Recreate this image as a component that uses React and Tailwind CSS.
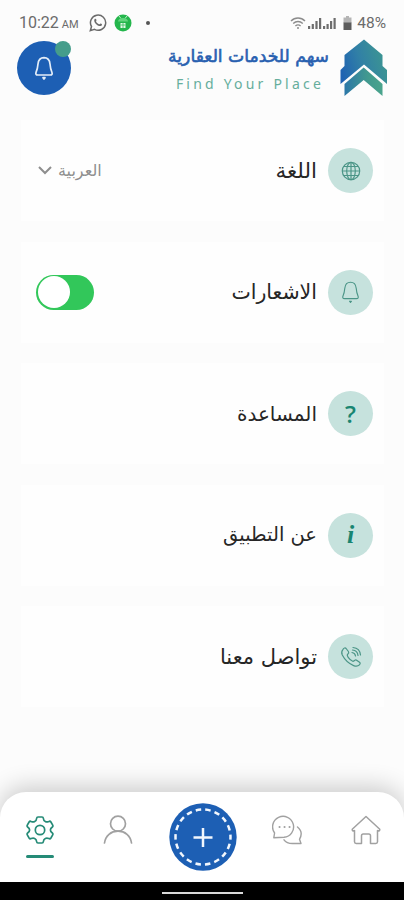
const BellIcon = ({ className }) => (
  <svg className={className} viewBox="0 0 20 24" fill="none" stroke="currentColor" strokeLinecap="round" strokeLinejoin="round">
    <path d="M10 1.2c-3.800 0-5.600 2.600-6 6.300-.3 3.500-.5 5-1.900 8.200-.7 1.700-.1 2.800 1.600 2.800h12.600c1.700 0 2.300-1.100 1.600-2.800-1.400-3.200-1.600-4.700-1.900-8.200C15.600 3.800 13.800 1.200 10 1.200z" />
    <path d="M9 21.200h2L10 22.500z" fill="currentColor" />
  </svg>
)

const GlobeIcon = () => (
  <svg className="size-5" viewBox="0 0 20 20" fill="none" stroke="currentColor" strokeWidth="1.200">
    <circle cx="10" cy="10" r="8.700" />
    <ellipse cx="10" cy="10" rx="4.300" ry="8.700" />
    <path d="M10 1.300v17.400M1.300 10h17.400M2.700 5.500h14.600M2.700 14.500h14.600" />
  </svg>
)

const PhoneIcon = () => (
  <svg className="size-[22px]" viewBox="0 0 22 22" fill="none" stroke="currentColor" strokeWidth="1.200" strokeLinecap="round" strokeLinejoin="round">
    <path d="M3 3.300c1-1.300 2.200-1.800 3.100-.8l2.300 3c.8 1.100.4 1.900-.7 2.800-.8.700-.6 1.500.5 3 1.500 2 3 3.400 4.500 4 .9.300 1.300-.5 2-1 .8-.6 1.500-.5 2.300.1l2.500 1.900c1 .8.800 1.700-.1 2.600-1.500 1.500-3.300 1.700-5.800.7-5-2-9-6-11.300-10.500-1-2.200-.6-4.300.7-5.800z" />
    <path d="M12 6.500c2 .2 3.300 1.500 3.500 3.500M12.500 4c3.200.3 5.200 2.300 5.500 5.500M13 1.500c4.400.4 7.100 3.100 7.500 7.500" />
  </svg>
)

const Logo = () => (
  <svg className="h-[58px] w-12" viewBox="0 0 48 58">
    <defs>
      <linearGradient id="roof" x1="0" y1="0.700" x2="1" y2="0.400">
        <stop offset="0" stopColor="#1f62b2" />
        <stop offset="0.450" stopColor="#3180a6" />
        <stop offset="1" stopColor="#3d9790" />
      </linearGradient>
      <linearGradient id="chevron" x1="0" y1="0" x2="1" y2="0">
        <stop offset="0" stopColor="#2c77a8" />
        <stop offset="0.600" stopColor="#41998f" />
        <stop offset="1" stopColor="#4aa48c" />
      </linearGradient>
    </defs>
    <path d="M24 .5l18.500 15.500v11l4.500 4v14L24 25.500 .5 45V31l4-4V16z" fill="url(#roof)" />
    <path d="M23.700 28.500L42.500 45v12L23.700 41 4.500 57V45z" fill="url(#chevron)" />
  </svg>
)

const StatusBar = () => (
  <div className="flex h-10 items-start justify-between pt-[15px] pl-[19px] pr-[18px] text-[#6b6b6b]">
    <div className="flex h-4 items-center">
      <div className="flex w-[60px] items-baseline gap-[3px] whitespace-nowrap font-[Roboto] text-[16px] leading-4">
        <span>10:22</span>
        <span className="text-[11px] leading-3">AM</span>
      </div>
      <svg className="ml-[10px] size-[18px]" viewBox="0 0 18 18" fill="none" stroke="currentColor" strokeWidth="1.500">
        <path d="M1.300 16.700l1.200-4.200a7.600 7.600 0 1 1 3 2.900z" />
        <path d="M5.500 5.200c1-.9 1.500-.4 2 .9.200.7-.8 1-.3 1.700.8 1.400 1.600 2 2.800 2.500.8.300 1-.9 1.600-.8 1.200.4 1.600.7 1.300 1.400-.6 1.400-2 1.500-3.600.8C7 10.500 4.300 7.500 5.500 5.200z" fill="currentColor" stroke="none" />
      </svg>
      <svg className="ml-[7px] size-[18px]" viewBox="0 0 18 18">
        <circle cx="9" cy="9" r="8.500" fill="#24b64c" />
        <path d="M5 2l2 2.500M13 2l-2 2.500" stroke="#bff0c8" strokeWidth="1" />
        <path d="M4 7.500a5 3.500 0 0 1 10 0z" fill="#62d47d" />
        <path d="M6.500 9h5v5h-5z" fill="#e4f9e8" />
        <path d="M9 9v5M6.500 11h5" stroke="#24b64c" strokeWidth=".7" />
      </svg>
      <span className="ml-[14px] size-1 rounded-full bg-[#555555]" />
    </div>
    <div className="flex h-4 items-center">
      <svg className="mr-[2px] h-[14px] w-4" viewBox="0 0 16 14" fill="none" stroke="#8c8c8c" strokeWidth="1.400">
        <path d="M1 5c4-4 10-4 14 0M3.200 7.500c2.800-2.700 6.800-2.700 9.600 0M5.400 10c1.600-1.400 3.600-1.400 5.200 0" />
        <circle cx="8" cy="12" r="1" fill="#8c8c8c" stroke="none" />
      </svg>
      <svg className="h-3 w-[28px]" viewBox="0 0 28 12" fill="#6d6d6d">
        <path d="M0 9h2.200v3H0zM3.700 7h2.200v5H3.700zM7.400 4h2.200v8H7.400zM11 1h2.200v11H11zM15 9h2.200v3H15zM18.500 7h2.200v5h-2.200zM22 4h2.200v8H22zM25.500 1h2.200v11h-2.200z" />
      </svg>
      <svg className="ml-[7px] mr-[5px] h-[14px] w-[9px]" viewBox="0 0 9 14">
        <path d="M3 0h3v1.500h2.500V7h-8V1.500H3z" fill="#b5b5b5" />
        <path d="M.5 6.500h8V14h-8z" fill="#5c5c5c" />
      </svg>
      <span className="font-[Roboto] text-[15.500px] leading-4">48%</span>
    </div>
  </div>
)

const Header = () => (
  <header className="flex h-20 items-start justify-between pl-[17px] pr-4">
    <div className="relative mt-[1px] flex size-[54px] items-center justify-center rounded-full bg-[#1d5fb4] text-[#e3edf8]">
      <BellIcon className="h-[25px] w-5 stroke-[1.700]" />
      <span className="absolute right-0 top-0 size-4 rounded-full bg-[#459d8b]" />
    </div>
    <div className="-mt-[1px] flex items-start">
      <div className="mr-[11px] flex flex-col items-end">
        <p dir="rtl" className="mt-[5px] whitespace-nowrap font-['DejaVu_Sans',sans-serif] text-[17.200px] leading-6 text-[#2860b0] [-webkit-text-stroke:0.600px_#2860b0]">سهم للخدمات العقارية</p>
        <p className="mt-[6px] mr-[5px] whitespace-nowrap font-['Noto_Sans',sans-serif] text-[14px] leading-5 tracking-[3.200px] text-[#66ae9c]">Find Your Place</p>
      </div>
      <Logo />
    </div>
  </header>
)

const Row = ({ icon, label, size = 'text-[20px]', children }) => (
  <div dir="rtl" className="flex h-[101px] items-center bg-[#fefefe] pr-[11px] pl-[15px]">
    <div className="flex size-[45px] items-center justify-center rounded-full bg-[#c6e2dd] text-[#4b9587]">{icon}</div>
    <span className={`mr-[11px] whitespace-nowrap font-['DejaVu_Sans',sans-serif] leading-7 text-[#262626] ${size}`}>{label}</span>
    <div className="mr-auto">{children}</div>
  </div>
)

const BottomNav = () => (
  <nav className="flex h-[90px] items-start rounded-t-[26px] bg-white pl-[25px] text-[#a1a1a1] shadow-[0_-5px_24px_rgba(0,0,0,0.2)]">
    <div className="mt-6 flex w-[30px] flex-col items-center text-[#258b77]">
      <svg className="size-[28px]" viewBox="0 0 28 28" fill="none" stroke="currentColor" strokeWidth="1.700" strokeLinejoin="round">
        <path d="M12 1h4c1 0 1.300.6 1.400 1.500.1 1.700.7 2.400 1.900 3 1.200.7 2.100.6 3.500 0 1-.5 1.600-.3 2.100.5l1.800 3.100c.5.900.2 1.500-.6 2.100-1.300.9-1.700 1.500-1.700 2.800s.4 1.900 1.700 2.800c.8.600 1.100 1.200.6 2.100L24.900 22c-.5.800-1.100 1-2.100.5-1.400-.6-2.300-.7-3.500 0-1.200.6-1.800 1.300-1.900 3-.1.900-.4 1.500-1.400 1.500h-4c-1 0-1.300-.6-1.400-1.500-.1-1.700-.7-2.400-1.900-3-1.200-.7-2.100-.6-3.500 0-1 .5-1.600.3-2.100-.5l-1.800-3.100c-.5-.9-.2-1.500.6-2.100 1.300-.9 1.700-1.500 1.700-2.800s-.4-1.900-1.700-2.800c-.8-.6-1.100-1.200-.6-2.100L3.100 6c.5-.8 1.100-1 2.100-.5 1.400.6 2.300.7 3.500 0 1.200-.6 1.800-1.300 1.900-3C10.700 1.600 11 1 12 1z" />
        <circle cx="14" cy="14" r="4.700" />
      </svg>
      <span className="mt-[11px] h-[3px] w-7 rounded-full bg-[#258b77]" />
    </div>
    <svg className="mt-[23px] ml-12 size-[30px]" viewBox="0 0 30 30" fill="none" stroke="currentColor" strokeWidth="1.700" strokeLinecap="round">
      <circle cx="15" cy="8.700" r="7.500" />
      <path d="M1.500 28c1-7.500 6.500-11.800 13.500-11.800S27.500 20.500 28.500 28" />
    </svg>
    <svg className="mt-[11px] ml-[35.500px] size-[68px]" viewBox="0 0 68 68" fill="none" stroke="#f2f7fd" strokeLinecap="butt">
      <circle cx="34" cy="34" r="33.700" fill="#1d5fb4" stroke="none" />
      <circle cx="34" cy="34" r="27.500" strokeWidth="2.500" strokeDasharray="5.500 4.099" strokeDashoffset="2.750" />
      <path d="M34 25v19M24.500 34.500h19" strokeWidth="2.500" />
    </svg>
    <svg className="mt-[23px] ml-[35px] h-[30px] w-[31px]" viewBox="0 0 31 30" fill="none" stroke="currentColor" strokeWidth="1.400" strokeLinecap="round" strokeLinejoin="round">
      <path d="M1.800 22.700l.8-4.700A10.500 10.500 0 1 1 12 22.300z" />
      <path d="M7.500 12h.1M12.500 12h.1M17.500 12h.1" strokeWidth="2" />
      <path d="M25.500 12c4 3.300 4.500 8 2 12.300l1.500 4.200H20.500c-4 0-6.800-1.300-8.500-3.700" />
    </svg>
    <svg className="mt-[23px] ml-12 size-[30px]" viewBox="0 0 30 30" fill="none" stroke="currentColor" strokeWidth="1.500" strokeLinejoin="round">
      <path d="M15 1.500L1.500 14c-.8 1.200.5 2.500 2 1.500v11.300c0 1 .7 1.700 1.700 1.700h5.300v-7.700c0-1 .7-1.800 1.700-1.800h5.600c1 0 1.700.8 1.700 1.800v7.700h5.300c1 0 1.700-.7 1.700-1.700V15.500c1.500 1 2.800-.3 2-1.500z" />
    </svg>
  </nav>
)

const App = () => {
  return (
    <div className="flex h-[900px] w-[404px] flex-col overflow-hidden bg-[#fcfcfc]">
      <StatusBar />
      <Header />
      <main className="flex grow flex-col gap-[20.500px] pl-[21px] pr-5">
        <Row icon={<GlobeIcon />} label="اللغة" size="text-[21.500px]">
          <div className="flex items-center text-[#8e8e8e]">
            <span className="-ml-[1px] whitespace-nowrap font-['DejaVu_Sans',sans-serif] text-[16px] leading-6">العربية</span>
            <svg className="mr-[7px] ml-[2px] h-[9px] w-[14px]" viewBox="0 0 14 9" fill="none" stroke="currentColor" strokeWidth="2">
              <path d="M1 1l6 6 6-6" />
            </svg>
          </div>
        </Row>
        <Row icon={<BellIcon className="h-[23px] w-[19px] stroke-[1.200]" />} label="الاشعارات" size="text-[20.500px]">
          <div className="flex h-[35px] w-[58px] items-center justify-end rounded-full bg-[#32c75a] p-[1.500px]">
            <span className="size-8 rounded-full bg-white" />
          </div>
        </Row>
        <Row
          icon={<span className="font-['Open_Sans',sans-serif] text-[24px] font-semibold leading-6 text-[#198571]">?</span>}
          label="المساعدة"
        />
        <Row
          icon={<span className="font-['Liberation_Serif',serif] text-[26px] font-bold italic leading-6 text-[#198571]">i</span>}
          label="عن التطبيق"
          size="text-[19.500px]"
        />
        <Row icon={<PhoneIcon />} label="تواصل معنا" size="text-[21px]" />
      </main>
      <BottomNav />
      <div className="flex h-[18px] shrink-0 justify-center bg-black pt-[10px]">
        <span className="h-[2px] w-[81px] bg-[#d9d9d9]" />
      </div>
    </div>
  )
}

export default App
